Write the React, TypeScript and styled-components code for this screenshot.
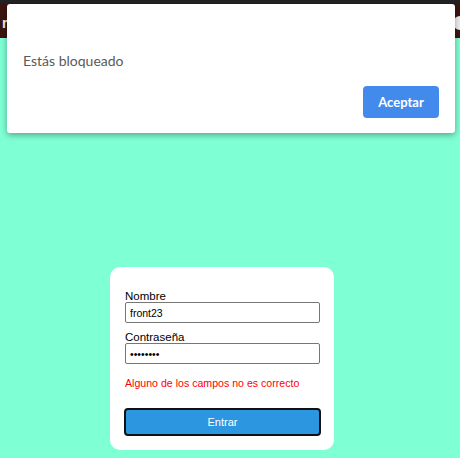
import React from "react";
import styled, { createGlobalStyle } from "styled-components";

const Global = createGlobalStyle`
  html, body { margin: 0; padding: 0; }
  body {
    background: #7fffd4;
    width: 460px;
    height: 458px;
    overflow: hidden;
    font-family: "Liberation Sans", Arial, sans-serif;
  }
`;

const Page = styled.div`
  position: relative;
  width: 460px;
  height: 458px;
  display: flex;
  flex-direction: column;
`;

const TopStrip = styled.div`
  height: 3px;
  background: #232323;
`;

const Header = styled.header`
  height: 35px;
  background: #3b1610;
  display: flex;
  align-items: center;
  justify-content: space-between;
  overflow: hidden;
`;

const HeaderTitle = styled.span`
  color: #f2f2f2;
  font-family: "Liberation Sans", Arial, sans-serif;
  font-size: 14px;
  font-weight: bold;
  margin-left: 2px;
  margin-top: 5px;
`;

const HeaderBadge = styled.span`
  width: 14px;
  height: 14px;
  border-radius: 50%;
  background: #eeeeee;
  margin-right: -7px;
  margin-top: 5px;
`;

const Main = styled.main`
  flex: 1;
  display: flex;
  align-items: flex-start;
  padding: 229px 0 0 110px;
`;

const Card = styled.form`
  width: 224px;
  height: 183px;
  box-sizing: border-box;
  background: #ffffff;
  border-radius: 10px;
  padding: 23px 14px 0 14px;
  display: flex;
  flex-direction: column;
`;

const Label = styled.label<{ $top?: number }>`
  font-size: 11.5px;
  color: #000;
  line-height: 12px;
  margin-top: ${(p) => p.$top ?? 0}px;
  padding-left: 1px;
`;

const Input = styled.input`
  box-sizing: border-box;
  width: 195px;
  height: 21px;
  margin: 0 0 0 1px;
  border: 1px solid #767676;
  border-radius: 2px;
  padding: 1px 4px;
  font-family: "Liberation Sans", Arial, sans-serif;
  font-size: 10.5px;
  color: #000;
  background: #fff;
  outline: none;
`;

const ErrorText = styled.p`
  margin: 12px 0 0 1px;
  font-size: 10.6px;
  line-height: 14px;
  color: #ff0000;
  white-space: nowrap;
`;

const SubmitButton = styled.button`
  box-sizing: border-box;
  width: 197px;
  height: 28px;
  margin-top: 18px;
  background: #2d96e1;
  border: 2px solid #111;
  border-radius: 4px;
  color: #ffffff;
  font-family: "Liberation Sans", Arial, sans-serif;
  font-size: 11px;
  padding: 0;
`;

const Dialog = styled.div`
  position: absolute;
  left: 7px;
  top: 4px;
  width: 448px;
  height: 129px;
  box-sizing: border-box;
  background: #ffffff;
  border-radius: 3px;
  box-shadow: 0 2px 6px rgba(0, 0, 0, 0.35);
  padding: 48px 16px 0 16px;
  display: flex;
  flex-direction: column;
`;

const DialogText = styled.p`
  margin: 0;
  font-family: Lato, "Open Sans", sans-serif;
  font-size: 14px;
  line-height: 18px;
  color: #5a5a5a;
`;

const DialogActions = styled.div`
  display: flex;
  justify-content: flex-end;
  margin-top: 16px;
`;

const AcceptButton = styled.button`
  width: 76px;
  height: 32px;
  background: #428bec;
  border: none;
  border-radius: 4px;
  color: #ffffff;
  font-family: Lato, "Open Sans", sans-serif;
  font-weight: bold;
  font-size: 13px;
  padding: 0;
`;

export default function App() {
  return (
    <>
      <Global />
      <Page>
        <TopStrip />
        <Header>
          <HeaderTitle>r</HeaderTitle>
          <HeaderBadge />
        </Header>
        <Main>
          <Card onSubmit={(e) => e.preventDefault()}>
            <Label>Nombre</Label>
            <Input defaultValue="front23" />
            <Label $top={8}>Contraseña</Label>
            <Input type="password" defaultValue="12345678" />
            <ErrorText>Alguno de los campos no es correcto</ErrorText>
            <SubmitButton type="submit">Entrar</SubmitButton>
          </Card>
        </Main>
        <Dialog role="dialog">
          <DialogText>Estás bloqueado</DialogText>
          <DialogActions>
            <AcceptButton>Aceptar</AcceptButton>
          </DialogActions>
        </Dialog>
      </Page>
    </>
  );
}
